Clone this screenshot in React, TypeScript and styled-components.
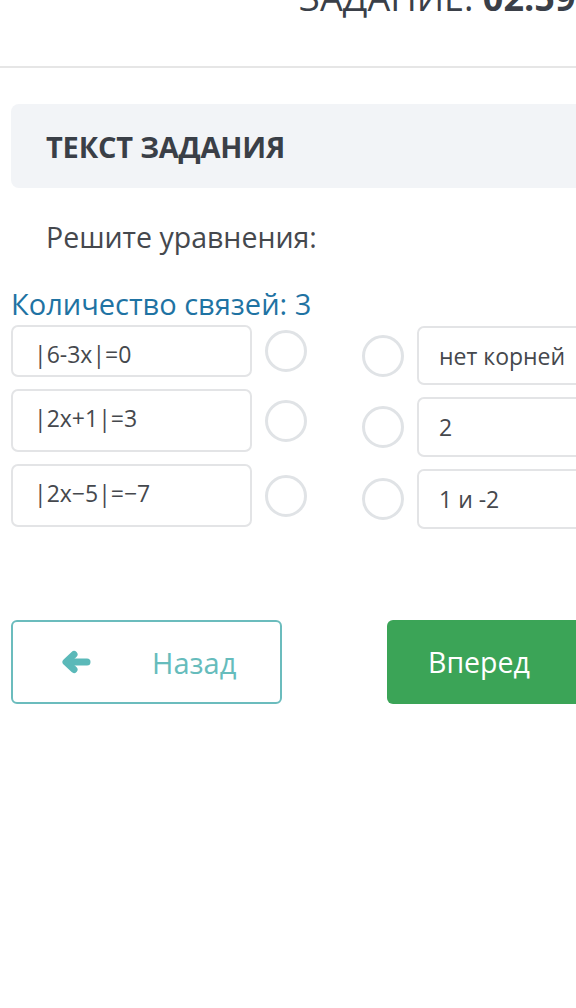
import React from "react";
import styled, { createGlobalStyle } from "styled-components";

const GlobalStyle = createGlobalStyle`
  html, body {
    margin: 0;
    padding: 0;
    background: #ffffff;
    overflow: hidden;
  }
  body {
    font-family: "Open Sans", "Noto Sans", sans-serif;
    color: #3d4148;
  }
`;

const Page = styled.div`
  width: 720px;
`;

const Header = styled.header`
  height: 66px;
  border-bottom: 2px solid #e6e6e6;
  padding-left: 299px;
  overflow: hidden;
`;

const Timer = styled.div`
  margin-top: -20px;
  font-size: 36px;
  line-height: 36px;
  font-weight: 400;
  color: #3a3f48;
  white-space: nowrap;

  b {
    font-weight: 700;
  }
`;

const Body = styled.main`
  padding: 36px 0 0 11px;
`;

const TaskCard = styled.section`
  height: 84px;
  background: #f2f4f7;
  border-radius: 8px;
  padding-left: 35px;
  display: flex;
  align-items: center;
`;

const TaskTitle = styled.h2`
  margin: 0;
  font-size: 29px;
  font-weight: 700;
  color: #3a3f47;
  letter-spacing: -0.2px;
`;

const Question = styled.p`
  margin: 31px 0 0 35px;
  font-size: 28.5px;
  line-height: 36px;
  color: #45484d;
`;

const LinksCount = styled.div`
  margin-top: 32px;
  font-size: 29px;
  line-height: 34px;
  color: #1f73a3;
`;

const Matching = styled.div`
  display: flex;
  align-items: flex-start;
  gap: 55px;
  margin-top: 4px;
`;

const Column = styled.div<{ $offset: number }>`
  display: flex;
  flex-direction: column;
  gap: 12px;
  margin-top: ${(p) => p.$offset}px;
`;

const Item = styled.div`
  display: flex;
  align-items: center;
  gap: 13px;
`;

const LeftBox = styled.div<{ $h: number }>`
  box-sizing: border-box;
  width: 241px;
  height: ${(p) => p.$h}px;
  border: 2px solid #e3e4e6;
  border-radius: 7px;
  padding: 12px 0 0 21px;
  font-size: 23px;
  line-height: 30px;
  color: #45484d;
`;

const RightBox = styled.div<{ $h: number }>`
  box-sizing: border-box;
  width: 220px;
  height: ${(p) => p.$h}px;
  border: 2px solid #e3e4e6;
  border-radius: 7px;
  padding-left: 20px;
  display: flex;
  align-items: center;
  font-size: 23px;
  color: #45484d;
`;

const Dot = styled.span`
  box-sizing: border-box;
  flex: none;
  width: 42px;
  height: 42px;
  border-radius: 50%;
  border: 3px solid #e0e3e6;
`;

const Actions = styled.div`
  display: flex;
  gap: 105px;
  margin-top: 91px;
`;

const BackButton = styled.button`
  box-sizing: border-box;
  width: 271px;
  height: 84px;
  border: 2px solid #6bbcbd;
  border-radius: 6px;
  background: #ffffff;
  color: #66bcbc;
  font-family: inherit;
  font-size: 29px;
  display: flex;
  align-items: center;
  padding: 0 0 0 48px;
  gap: 61px;
`;

const NextButton = styled.button`
  box-sizing: border-box;
  width: 240px;
  height: 84px;
  border: none;
  border-radius: 6px;
  background: #3ba457;
  color: #ffffff;
  font-family: inherit;
  font-size: 28.5px;
  text-align: left;
  padding: 0 0 0 41px;
`;

const ArrowLeft = () => (
  <svg width="30" height="24" viewBox="0 0 30 24" aria-hidden="true">
    <g
      fill="none"
      stroke="#5bb9b9"
      strokeWidth="7"
      strokeLinecap="round"
      strokeLinejoin="round"
    >
      <polyline points="13,4.5 5,12 13,19.5" />
      <line x1="6" y1="12" x2="26" y2="12" />
    </g>
  </svg>
);

const left = [
  { text: "|6-3x|=0", h: 52 },
  { text: "|2x+1|=3", h: 63 },
  { text: "|2x\u22125|=\u22127", h: 63 },
];

const right = [
  { text: "нет корней", h: 59 },
  { text: "2", h: 60 },
  { text: "1 и -2", h: 60 },
];

export default function App() {
  return (
    <Page>
      <GlobalStyle />
      <Header>
        <Timer>
          ЗАДАНИЕ: <b>02.59</b>
        </Timer>
      </Header>
      <Body>
        <TaskCard>
          <TaskTitle>ТЕКСТ ЗАДАНИЯ</TaskTitle>
        </TaskCard>
        <Question>Решите уравнения:</Question>
        <LinksCount>Количество связей: 3</LinksCount>
        <Matching>
          <Column $offset={0}>
            {left.map((l) => (
              <Item key={l.text}>
                <LeftBox $h={l.h}>{l.text}</LeftBox>
                <Dot />
              </Item>
            ))}
          </Column>
          <Column $offset={1}>
            {right.map((r) => (
              <Item key={r.text}>
                <Dot />
                <RightBox $h={r.h}>{r.text}</RightBox>
              </Item>
            ))}
          </Column>
        </Matching>
        <Actions>
          <BackButton>
            <ArrowLeft />
            Назад
          </BackButton>
          <NextButton>Вперед</NextButton>
        </Actions>
      </Body>
    </Page>
  );
}
